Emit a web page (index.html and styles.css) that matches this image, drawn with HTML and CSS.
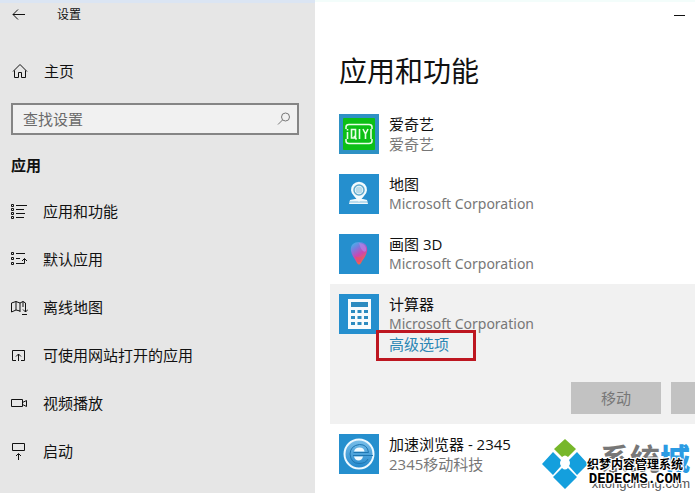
FILE: index.html
```html
<!DOCTYPE html>
<html lang="zh-CN">
<head>
<meta charset="utf-8">
<meta name="viewport" content="width=device-width, initial-scale=1">
<title>设置</title>
<link rel="stylesheet" href="styles.css">
</head>
<body>
<div class="window">
  <aside class="sidebar">
    <header class="titlebar">
      <button class="back" type="button" aria-label="返回">
        <svg width="14" height="12" viewBox="0 0 14 12"><path d="M13 5.500H1M6 .5L1 5.500l5 5"/></svg>
      </button>
      <span>设置</span>
    </header>
    <a class="home" href="#">
      <svg width="16" height="16" viewBox="0 0 16 16"><path d="M1 8.500L8 1.500l7 7M2.500 7.500V14.500H6.500V9.500H9.500V14.500H13.500V7.500"/></svg>
      <span>主页</span>
    </a>
    <form class="search">
      <input type="search" placeholder="查找设置" aria-label="查找设置">
      <svg width="14" height="14" viewBox="0 0 14 14"><circle cx="8.500" cy="5" r="4"/><path d="M5.500 8L1 12.500"/></svg>
    </form>
    <h2>应用</h2>
    <nav>
      <a href="#"><svg width="17" height="17" viewBox="0 0 17 17"><path d="M.5 1.500h2v2h-2zM.5 5.500h2v2h-2zM.5 9.500h2v2h-2zM.5 13.500h2v2h-2zM5 2.500h11M5 6.500h8M5 10.500h9M5 14.500h8"/></svg><span>应用和功能</span></a>
      <a href="#"><svg width="17" height="17" viewBox="0 0 17 17"><path d="M.5 1.500h2v2h-2zM.5 6.500h2v2h-2zM.5 11.500h2v2h-2zM5 2.500h9M5 7.500h4M5 12.500h8.500V7.500M11 10l2.500-2.500L16 10"/></svg><span>默认应用</span></a>
      <a href="#"><svg width="17" height="17" viewBox="0 0 17 17"><path d="M9 12l-4-1-4.500 2V4L5 2.500 9 4l3-1.500L14.500 4v9M5 2.500V11M9 4v9M12 2.500V8M12 10.500l2.500 2.500 2.500-2.500M11 15.500h5"/></svg><span>离线地图</span></a>
      <a href="#"><svg width="17" height="17" viewBox="0 0 17 17"><path d="M5 13.500H1.500v-10h12v10H10M7.500 14V7M5 9.500L7.500 7 10 9.500"/></svg><span>可使用网站打开的应用</span></a>
      <a href="#"><svg width="17" height="17" viewBox="0 0 17 17"><path d="M.5 4.500h11v7h-11zM11.500 7.500l4-2v6l-4-2"/></svg><span>视频播放</span></a>
      <a href="#"><svg width="17" height="17" viewBox="0 0 17 17"><path d="M1.500.5h12v7h-12zM7.500 17v-6M5 13l2.500-2.500L10 13"/></svg><span>启动</span></a>
    </nav>
  </aside>

  <main>
    <header class="controls">
      <button type="button" aria-label="最小化"><svg width="11" height="11" viewBox="0 0 11 11"><path d="M0 4.500h11"/></svg></button>
    </header>
    <h1>应用和功能</h1>
    <ul class="apps">
      <li>
        <svg class="tile" width="40" height="40" viewBox="0 0 40 40"><path fill="#2e91c4" d="M0 0h40v40H0z"/><rect x="4" y="4" width="32" height="32" rx="1" fill="#0cbf16"/><path d="M7 15v-2q0-2.500 3-2.500h20q3 0 3 2.500v2M7 25v2q0 2.500 3 2.500h20q3 0 3-2.500v-2" fill="none" stroke="#e9ffe9" stroke-width="1.500"/><path d="M8.500 15v1.500M8.500 18v7M12.500 15.500h4v8.500h-4zM15 22l2.500 3.500M20.500 15v10M24 15l2.500 5 2.500-5M26.500 20v5M32 15v10" fill="none" stroke="#e9ffe9" stroke-width="1.600"/></svg>
        <div class="info"><h3>爱奇艺</h3><p>爱奇艺</p></div>
      </li>
      <li>
        <svg class="tile" width="40" height="40" viewBox="0 0 40 40"><path fill="#258fce" d="M0 0h40v40H0z"/><path d="M11 26l5-1h8l4 1 1 4H10z" fill="#eef8fc"/><path d="M10 28h19" stroke="#82bddd"/><path d="M20 28l-5-6a8 8 0 1 1 10 0z" fill="#f4fbfd"/><circle cx="20" cy="16" r="5" fill="none" stroke="#5fa9cd" stroke-width="1.500"/><circle cx="20" cy="16" r="3.500" fill="#b8dbea"/></svg>
        <div class="info"><h3>地图</h3><p class="latin">Microsoft Corporation</p></div>
      </li>
      <li>
        <svg class="tile" width="40" height="40" viewBox="0 0 40 40"><defs><linearGradient id="balloon" x1="0" y1="0" x2=".5" y2="1"><stop offset="0" stop-color="#35c3ed"/><stop offset=".35" stop-color="#7a7bdf"/><stop offset=".65" stop-color="#cb46b1"/><stop offset="1" stop-color="#f16842"/></linearGradient></defs><path fill="#258fce" d="M0 0h40v40H0z"/><path d="M20 8c6 0 9 4 8 9-1 6-4 8-6 12q-2 3-4 0c-2-4-5-7-6-12-1-5 2-9 8-9z" fill="url(#balloon)"/><path d="M20 9c5 0 8 4 7 8q-4 3-7-8z" fill="#b982e5" opacity=".7"/><path d="M16 22q2 3 2 6h4q0-3 2-6-4 3-8 0z" fill="#e64f70"/></svg>
        <div class="info"><h3>画图 3D</h3><p class="latin">Microsoft Corporation</p></div>
      </li>
      <li class="selected">
        <svg class="tile" width="40" height="40" viewBox="0 0 40 40"><path fill="#258fce" d="M0 0h40v40H0z"/><path fill="#f7fbfd" d="M9 5h23v30H9z"/><path fill="#2c8bc0" d="M12 8h17v5H12zM12 16h4v3h-4zM18.500 16h4v3h-4zM25 16h4v3h-4zM12 22h4v3h-4zM18.500 22h4v3h-4zM25 22h4v3h-4zM12 28h4v3h-4zM18.500 28h4v3h-4zM25 28h4v3h-4z"/></svg>
        <div class="info"><h3>计算器</h3><p class="latin">Microsoft Corporation</p><a class="advanced" href="#">高级选项</a></div>
        <div class="actions"><button type="button" disabled>移动</button><button type="button" disabled aria-label="卸载"></button></div>
      </li>
      <li>
        <svg class="tile" width="40" height="40" viewBox="0 0 40 40"><defs><linearGradient id="globe" x1="0" y1="0" x2="0" y2="1"><stop offset="0" stop-color="#7cc0ea"/><stop offset="1" stop-color="#2187cc"/></linearGradient></defs><path fill="#258fce" d="M0 0h40v40H0z"/><circle cx="20" cy="20" r="14.500" fill="url(#globe)" stroke="#eef9ff" stroke-width="2"/><path d="M15 17.500q1-4 5.500-4t5 4z" fill="#f3fbff"/><path d="M15 22.500h9q-1 4-4.500 4t-4.500-4z" fill="#f3fbff"/><path d="M34 21.500H14M29.500 18.500H14.500M29.500 18.500q-1-8-9-8-9 1-9.500 9.500 1 9.500 9 9.500 7 0 9-4.500" fill="none" stroke="#1e76b1"/></svg>
        <div class="info"><h3>加速浏览器 - 2345</h3><p>2345移动科技</p></div>
      </li>
    </ul>
  </main>

  <div class="watermark">
    <svg width="46" height="50" viewBox="0 0 46 50"><path fill="#77b72a" d="M23 0l11 10-8 8q-3-3-6 0l-8-8z"/><path fill="#149fdd" d="M11 13l8 8q-2 3 0 6l-8 9L0 25zM35 13l11 12-11 11-8-9q2-3 0-6zM20 29q3 3 6 0l9 9-12 12-12-12z"/></svg>
    <div class="brand">
      <span class="brand-name">系统<b>城</b></span>
      <span class="brand-url">xitongcheng.com</span>
    </div>
    <div class="stamp"><span class="stamp-name">织梦内容管理系统</span><span class="stamp-url">DEDECMS.COM</span></div>
  </div>
</div>
</body>
</html>
```
FILE: styles.css
```css
* {
  box-sizing: border-box;
}

body {
  margin: 0;
  background: #fff;
  color: #111;
  font: 15px/20px "Open Sans", "Noto Sans CJK SC", sans-serif;
}

h1, h2, h3, p, ul {
  margin: 0;
  padding: 0;
  font-weight: 400;
}

a {
  color: inherit;
  text-decoration: none;
}

button {
  padding: 0;
  border: 0;
  background: none;
  font: inherit;
}

svg {
  flex: none;
}

.window {
  position: relative;
  display: grid;
  grid-template-columns: 315px minmax(0, 1fr);
  min-height: 100vh;
  overflow: hidden;
}

.sidebar {
  padding: 0 16px 0 11px;
  border-top: 3px solid #dbe5f3;
  background: #e6e6e6;
}

.sidebar svg,
.controls svg {
  display: block;
  fill: none;
  stroke: #111;
}

.titlebar {
  display: flex;
  align-items: center;
  gap: 31px;
  height: 24px;
  padding-left: 1px;
  font-size: 12px;
}

.home {
  display: flex;
  align-items: center;
  gap: 16px;
  height: 40px;
  margin-top: 24px;
  padding-left: 1px;
}

.search {
  display: flex;
  align-items: center;
  height: 32px;
  margin-top: 12px;
  padding: 0 6px 0 10px;
  border: 2px solid #858585;
  background: #f1f1f1;
}

.search input {
  flex: 1;
  min-width: 0;
  padding: 0;
  border: 0;
  outline: 0;
  background: none;
  font: inherit;
}

.search input::placeholder {
  color: #6a6a6a;
}

.search svg {
  stroke: #777;
}

h2 {
  margin: 20px 0 12px;
  font-size: 15px;
  font-weight: 700;
}

nav a {
  display: flex;
  align-items: center;
  gap: 15px;
  height: 48px;
}

main {
  min-width: 0;
  padding-left: 15px;
  border-top: 2px solid #f3fdfb;
}

.controls {
  display: flex;
  justify-content: flex-end;
  height: 28px;
  padding-right: 10px;
}

h1 {
  padding: 20px 9px 12px;
  font-size: 28px;
  line-height: 42px;
}

.apps {
  list-style: none;
}

.apps li {
  display: flex;
  flex-wrap: wrap;
  gap: 0 10px;
  padding: 10px 9px;
}

.info h3 {
  font-size: 15px;
  line-height: 20px;
}

.info p {
  color: #777;
}

.info .latin {
  font-family: "Noto Sans", sans-serif;
  font-size: 14px;
}

.apps .selected {
  background: #f1f1f1;
}

.advanced {
  display: block;
  width: 100px;
  margin: -4px 0 0 -13px;
  padding: 0 10px 3px;
  border: 3px solid #bd1620;
  color: #2b86b4;
  line-height: 22px;
}

.actions {
  display: flex;
  flex: 1 0 100%;
  justify-content: flex-end;
  gap: 10px;
  margin: 21px -75px 0 0;
}

.actions button {
  flex: none;
  width: 90px;
  height: 32px;
  background: #c2c2c2;
  color: #777;
}

.watermark {
  position: absolute;
  right: 5px;
  bottom: 0;
  display: flex;
  align-items: flex-start;
  gap: 4px;
  color: #777;
}

.brand {
  display: flex;
  flex-direction: column;
  align-items: flex-end;
  padding-top: 4px;
}

.brand-name {
  font-size: 30px;
  font-weight: 700;
  line-height: 32px;
}

.brand-name b {
  color: #2b9be3;
}

.brand-url {
  color: #555;
  font: 13px/18px "Liberation Sans", sans-serif;
}

.stamp {
  position: absolute;
  right: 7px;
  bottom: 7px;
  display: flex;
  flex-direction: column;
  align-items: center;
  color: #000;
  font-size: 12px;
  font-weight: 700;
  line-height: 14px;
  white-space: nowrap;
  text-shadow: 1px 0 #fff, -1px 0 #fff, 0 1px #fff, 0 -1px #fff, 1px 1px #fff, -1px -1px #fff, 1px -1px #fff, -1px 1px #fff;
}

.stamp-url {
  font-family: "Liberation Mono", monospace;
  font-size: 14px;
}
```
